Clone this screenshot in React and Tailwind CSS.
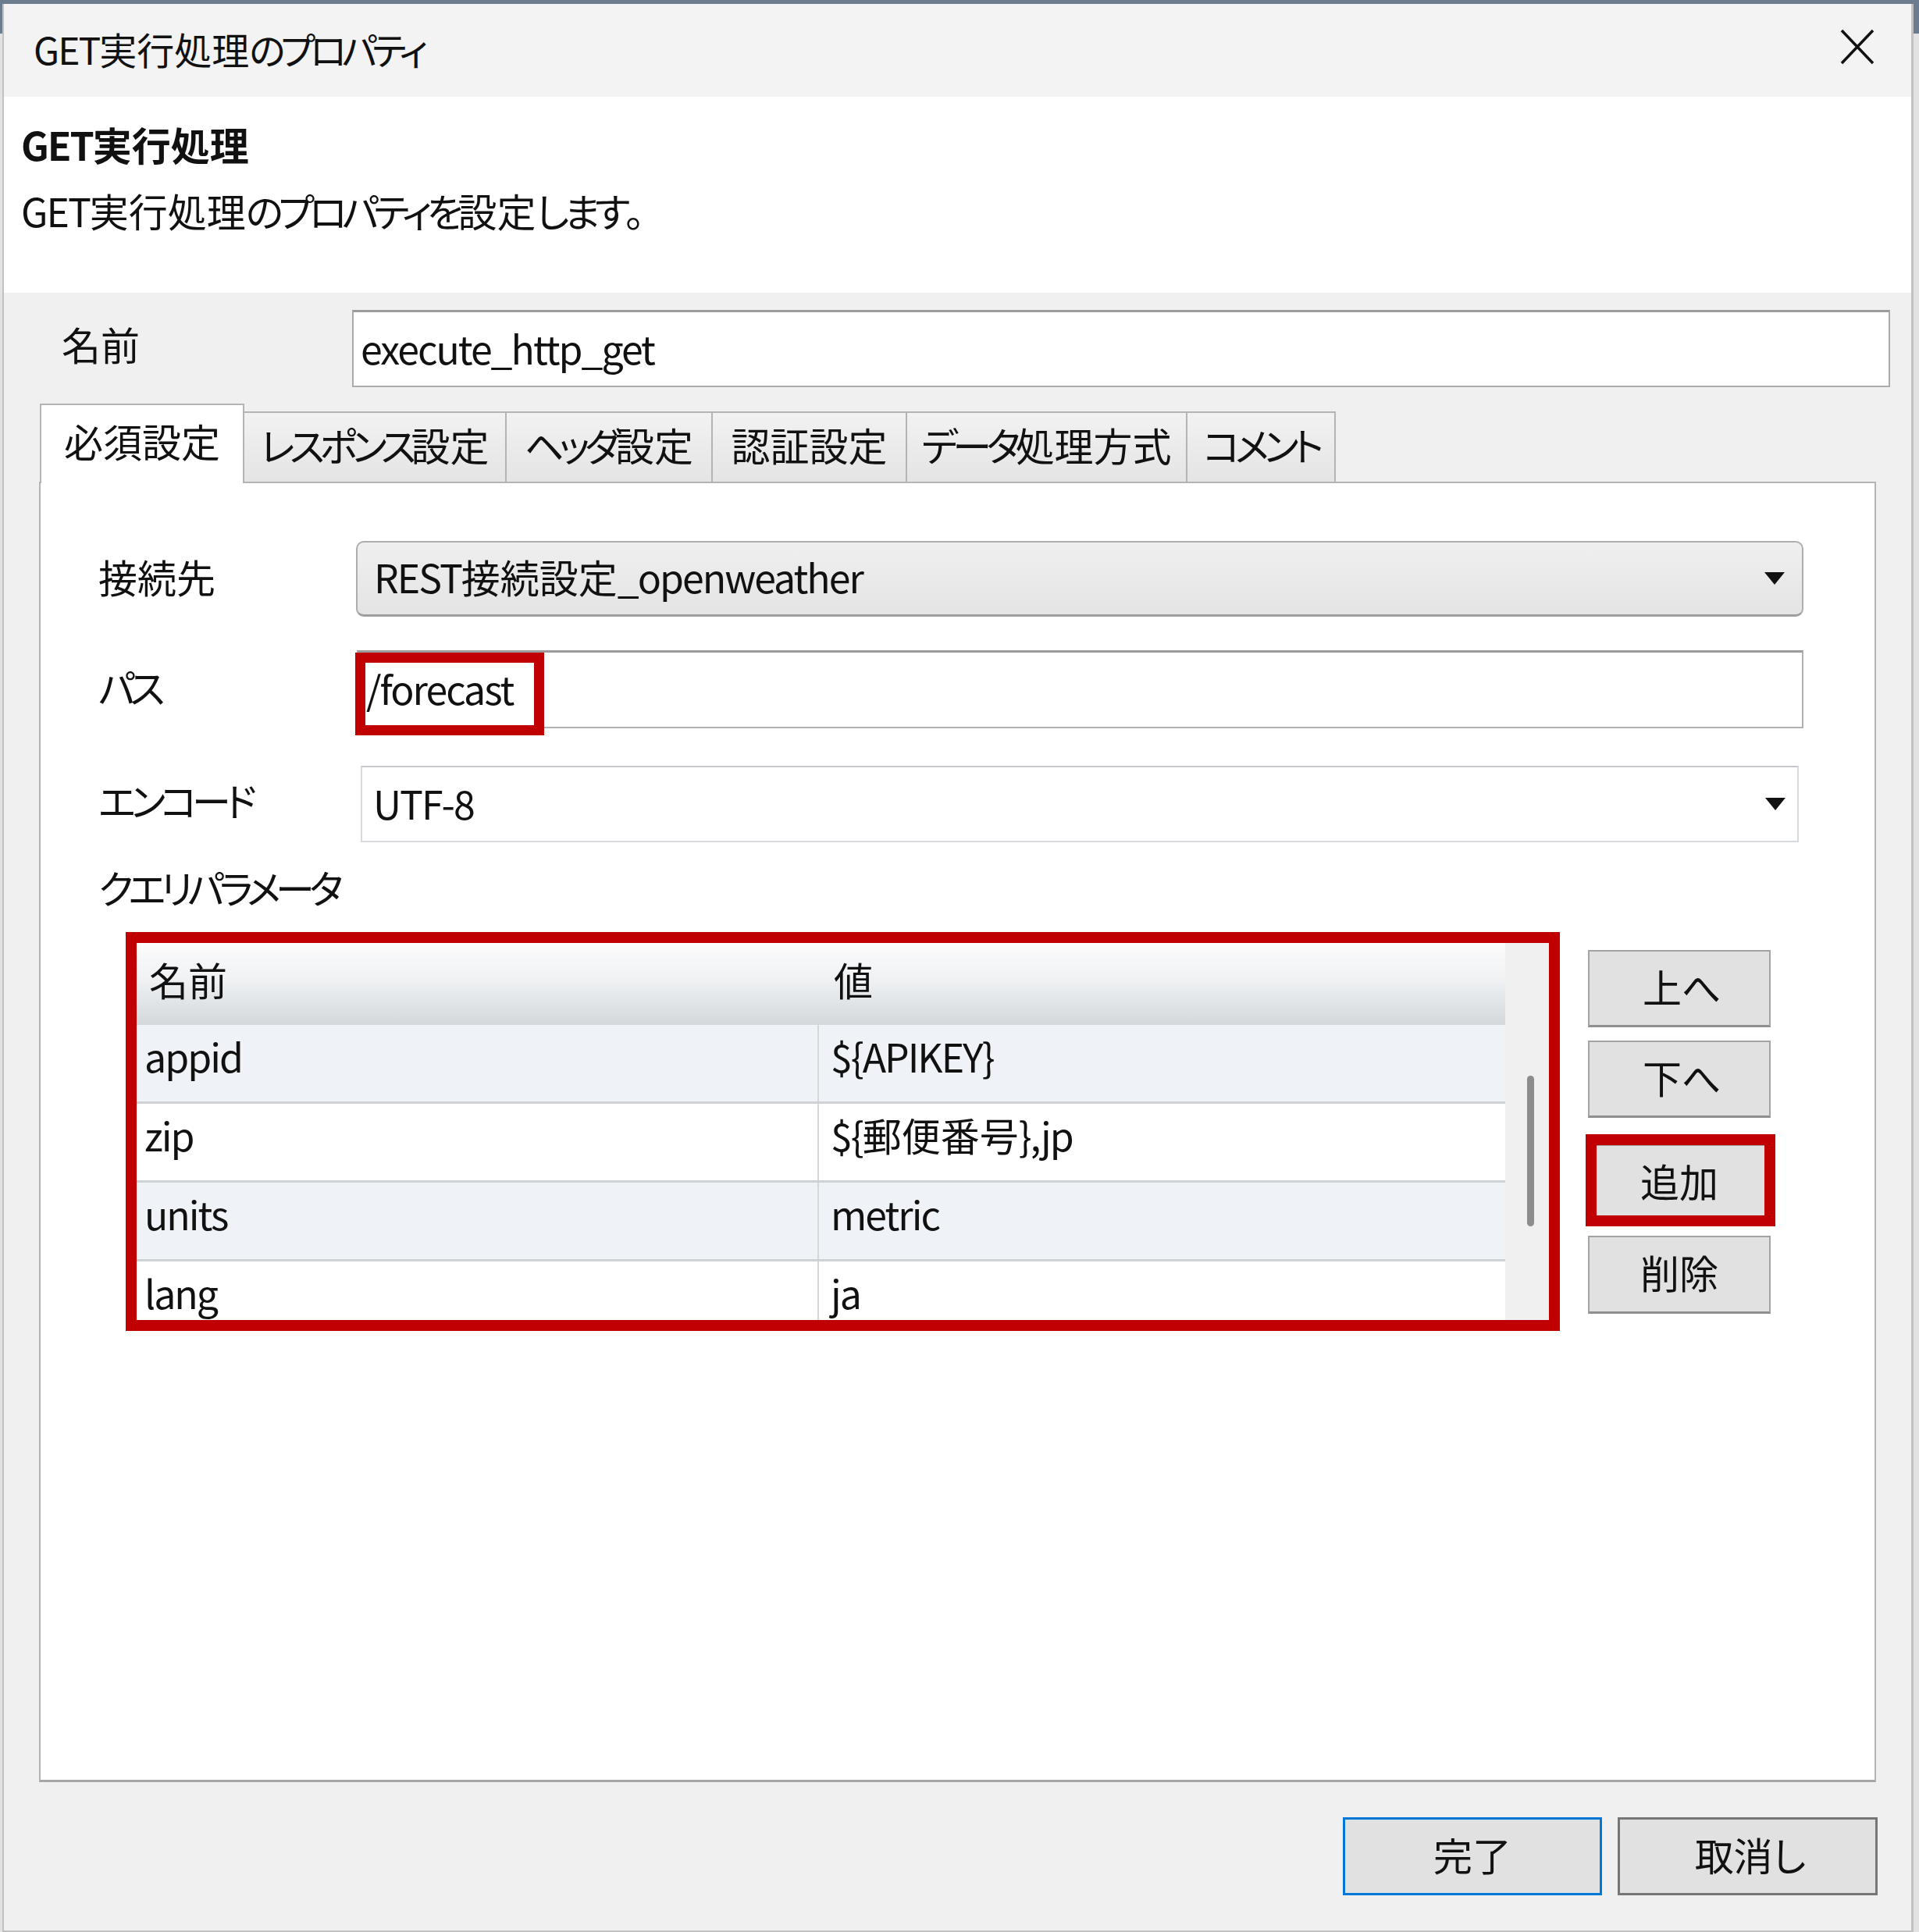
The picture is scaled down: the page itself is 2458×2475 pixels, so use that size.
import React from 'react';

const TABS = [
  { label: '必須設定', w: 'w-[262px]', active: true },
  { label: 'レスポンス設定', w: 'w-[336px]' },
  { label: 'ヘッダ設定', w: 'w-[264px]' },
  { label: '認証設定', w: 'w-[249px]' },
  { label: 'データ処理方式', w: 'w-[359px]' },
  { label: 'コメント', w: 'w-[190px]' },
];

const PARAMS = [
  { name: 'appid', value: '${APIKEY}' },
  { name: 'zip', value: '${郵便番号},jp' },
  { name: 'units', value: 'metric' },
  { name: 'lang', value: 'ja' },
];

// かなと英数字を詰めて UI フォントの字幅に寄せる
function J({ children }) {
  const parts = String(children).match(/[\u3040-\u30ff]+|[\x20-\x7e]+|[^\u3040-\u30ff\x20-\x7e]+/g) || [];
  return parts.map((p, i) => {
    if (/^[\u3040-\u30ff]/.test(p)) return <span key={i} className="tracking-[-0.13em]">{p}</span>;
    if (/^[\x20-\x7e]/.test(p)) return <span key={i} className="tracking-[-0.04em]">{p}</span>;
    return <span key={i}>{p}</span>;
  });
}

function Caret() {
  return (
    <svg width="26" height="16" viewBox="0 0 26 16">
      <path d="M0 0H26L13 16Z" fill="#111" />
    </svg>
  );
}

function SideButton({ children, className = '' }) {
  return (
    <div className={`relative w-[234px] h-[99px] flex items-center justify-center pb-[6px] bg-[#e1e1e1] border-2 border-[#a3a3a3] border-b-[3px] border-b-[#8f8f8f] text-[50px] ${className}`}>
      {children}
    </div>
  );
}

export default function App() {
  return (
    <div className="w-[2458px] h-[2475px] overflow-hidden pt-[5px] pl-[3px] bg-[linear-gradient(to_bottom,#6d7b8f_0px,#6d7b8f_43px,#e2e2e2_43px)] font-['Noto_Sans_CJK_JP',sans-serif] [font-feature-settings:'palt'] text-[#111]">
      <div className="w-[2448px] h-[2470px] flex flex-col border-l-2 border-r-[3px] border-b-2 border-[#c2c2c2] bg-[#f0f0f0]">

        {/* タイトルバー */}
        <div className="h-[119px] shrink-0 flex items-center justify-between bg-[#f3f3f3] pl-[38px] pr-[47px]">
          <span className="text-[48px] leading-none pb-[6px]"><J>GET実行処理のプロパティ</J></span>
          <svg width="44" height="46" viewBox="0 0 44 46" className="-mt-[10px]">
            <path d="M2 2L42 44M42 2L2 44" stroke="#111" strokeWidth="3.5" />
          </svg>
        </div>

        {/* 説明 */}
        <div className="h-[251px] shrink-0 bg-white pl-[22px] pt-[30px]">
          <div className="text-[50px] leading-[60px] font-bold"><J>GET実行処理</J></div>
          <div className="mt-[25px] text-[50px] leading-[60px]"><J>GET実行処理のプロパティを設定します。</J></div>
        </div>

        <div className="flex-1 flex flex-col pt-[22px]">
          {/* 名前 */}
          <div className="flex items-center h-[99px] pl-[74px]">
            <div className="w-[372px] text-[50px] leading-none pb-[14px]">名前</div>
            <div className="w-[1970px] h-[99px] flex items-center pl-[9px] pb-[3px] bg-white border-2 border-t-[3px] border-[#ababab] border-t-[#9c9c9c] text-[50px]">
              <J>execute_http_get</J>
            </div>
          </div>

          {/* タブ */}
          <div className="mt-[21px] pl-[46px] flex items-end h-[100px] relative z-10">
            {TABS.map(t => (
              <div
                key={t.label}
                className={
                  t.active
                    ? `${t.w} h-[102px] -mb-[2px] flex items-center justify-center bg-white border-2 border-b-0 border-[#b4b4b4] text-[50px] pb-[10px]`
                    : `${t.w} h-[90px] flex items-center justify-center bg-[linear-gradient(to_bottom,#f2f2f2,#e4e4e4)] border-t-2 border-r-2 border-[#b4b4b4] text-[50px] pb-[8px]`
                }
              >
                <J>{t.label}</J>
              </div>
            ))}
          </div>

          {/* 必須設定パネル */}
          <div className="ml-[45px] w-[2353px] h-[1666px] shrink-0 bg-white border-2 border-b-[3px] border-[#b4b4b4] border-b-[#a6a6a6] pt-[74px]">
            <div className="flex items-center pl-[74px]">
              <div className="w-[330px] text-[50px] leading-none pb-[8px]">接続先</div>
              <div className="w-[1854px] h-[97px] flex items-center justify-between pl-[21px] pr-[22px] rounded-[10px] bg-[linear-gradient(to_bottom,#efefef,#e4e4e4)] border-2 border-b-[3px] border-[#adadad] border-b-[#9e9e9e] text-[50px]">
                <span className="pb-[6px]"><J>REST接続設定_openweather</J></span>
                <Caret />
              </div>
            </div>

            <div className="mt-[43px] flex items-center pl-[74px]">
              <div className="w-[330px] text-[50px] leading-none pb-[8px]"><J>パス</J></div>
              <div className="relative w-[1853px] h-[100px] ml-[1px] flex items-center pl-[10px] pb-[4px] bg-white border-2 border-t-[3px] border-[#b0b0b0] border-t-[#9c9c9c] text-[50px]">
                <J>/forecast</J>
                <div className="absolute left-[-4px] top-[0px] w-[242px] h-[106px] border-[13px] border-[#c00000]" />
              </div>
            </div>

            <div className="mt-[48px] flex items-center pl-[74px]">
              <div className="w-[330px] text-[50px] leading-none pb-[12px]"><J>エンコード</J></div>
              <div className="w-[1842px] h-[98px] ml-[6px] flex items-center justify-between pl-[14px] pr-[15px] bg-white border-2 border-[#d6d9dd] border-t-[#c6c9cd] text-[50px]">
                <span className="pb-[4px]"><J>UTF-8</J></span>
                <Caret />
              </div>
            </div>

            <div className="mt-[27px] pl-[74px] text-[50px] leading-[60px]"><J>クエリパラメータ</J></div>

            {/* クエリパラメータ一覧 */}
            <div className="mt-[28px] pl-[109px] flex items-start">
              <div className="w-[1837px] h-[511px] border-[14px] border-[#c00000] flex overflow-hidden">
                <div className="w-[1753px] h-[483px] overflow-hidden">
                  <div className="h-[105px] flex bg-[linear-gradient(to_bottom,#fcfcfc_0%,#eff1f3_45%,#d3d8dc_100%)] text-[50px]">
                    <div className="w-[872px] flex items-center pl-[16px] pb-[12px]">名前</div>
                    <div className="flex-1 flex items-center pl-[21px] pb-[12px]">値</div>
                  </div>
                  {PARAMS.map((p, i) => (
                    <div
                      key={p.name}
                      className={`h-[101px] flex border-b-[3px] border-[#cfd2d5] text-[50px] ${i % 2 === 0 ? 'bg-[#eff3f7]' : 'bg-white'}`}
                    >
                      <div className="w-[872px] flex items-center pl-[10px] pb-[20px]"><J>{p.name}</J></div>
                      <div className="flex-1 flex items-center pl-[15px] pb-[20px] border-l-2 border-[#d6d6d6]"><J>{p.value}</J></div>
                    </div>
                  ))}
                </div>
                <div className="flex-1 bg-[#f0f0f0] flex justify-center">
                  <div className="mt-[170px] ml-[8px] w-[9px] h-[193px] rounded-full bg-[#8c8c8c]" />
                </div>
              </div>

              <div className="ml-[36px] pt-[23px] flex flex-col">
                <SideButton><J>上へ</J></SideButton>
                <SideButton className="mt-[17px]"><J>下へ</J></SideButton>
                <SideButton className="mt-[34px]">
                  追加
                  <div className="absolute left-[-5px] top-[-15px] w-[243px] h-[118px] border-[14px] border-[#c00000]" />
                </SideButton>
                <SideButton className="mt-[18px] h-[100px]">削除</SideButton>
              </div>
            </div>
          </div>

          {/* 完了・取消し */}
          <div className="mt-[45px] pr-[43px] flex justify-end gap-[20px]">
            <div className="w-[332px] h-[100px] flex items-center justify-center pb-[6px] bg-[#e1e1e1] border-[3px] border-[#0078d7] text-[50px]">完了</div>
            <div className="w-[333px] h-[100px] flex items-center justify-center pb-[6px] bg-[#e1e1e1] border-[3px] border-[#767676] text-[50px]"><J>取消し</J></div>
          </div>
        </div>
      </div>
    </div>
  );
}
